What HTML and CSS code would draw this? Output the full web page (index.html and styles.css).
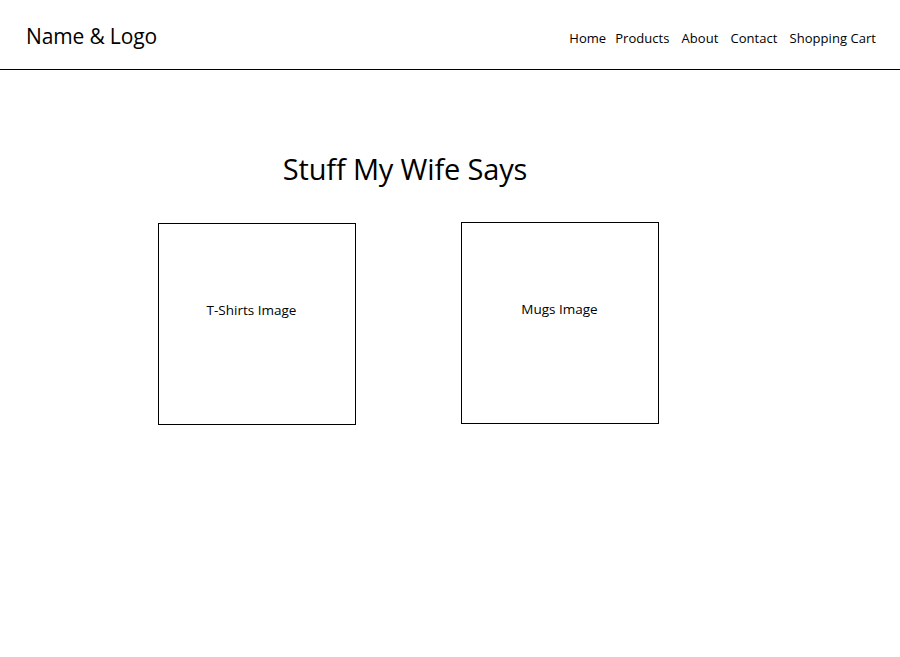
FILE: index.html
```html
<!DOCTYPE html>
<html>
<head>
<meta charset="utf-8">
<link rel="stylesheet" href="styles.css">
</head>
<body>
<header class="site-header">
  <div class="brand">Name &amp; Logo</div>
  <nav class="nav">
    <a class="nav-link nav-first" href="#">Home</a>
    <a class="nav-link" href="#">Products</a>
    <a class="nav-link" href="#">About</a>
    <a class="nav-link" href="#">Contact</a>
    <a class="nav-link" href="#">Shopping Cart</a>
  </nav>
</header>
<main class="main">
  <h1 class="title">Stuff My Wife Says</h1>
  <div class="products">
    <div class="product-box product-shirts"><span class="product-label">T-Shirts Image</span></div>
    <div class="product-box product-mugs"><span class="product-label">Mugs Image</span></div>
  </div>
</main>
</body>
</html>
```
FILE: styles.css
```css
html, body {
  margin: 0;
  padding: 0;
  background: #fff;
  color: #000;
  font-family: "Open Sans", "Noto Sans", sans-serif;
}
.site-header {
  height: 69px;
  border-bottom: 1px solid #000;
  display: flex;
  align-items: center;
  justify-content: space-between;
  padding: 0 24px 0 26px;
  box-sizing: content-box;
}
.brand {
  font-size: 21px;
  letter-spacing: -0.15px;
  margin-top: 3px;
}
.nav {
  display: flex;
  gap: 12px;
  margin-top: 7px;
}
.nav-link {
  color: #000;
  text-decoration: none;
  font-size: 13px;
  letter-spacing: 0.05px;
}
.nav-first {
  margin-right: -3px;
}
.main {
  width: 810px;
  display: flex;
  flex-direction: column;
  align-items: center;
}
.title {
  font-weight: normal;
  font-size: 29px;
  letter-spacing: -0.15px;
  margin: 79px 0 0;
  line-height: 40px;
}
.products {
  display: flex;
  align-items: flex-start;
  gap: 105px;
  margin-top: 34px;
  margin-left: 6px;
}
.product-box {
  width: 196px;
  height: 172px;
  border: 1px solid #000;
  display: flex;
  align-items: center;
  justify-content: center;
  padding-bottom: 28px;
  box-sizing: content-box;
}
.product-shirts {
  padding-right: 10px;
  width: 186px;
}
.product-mugs {
  margin-top: -1px;
}
.product-label {
  font-size: 13.5px;
  letter-spacing: 0;
}
```
